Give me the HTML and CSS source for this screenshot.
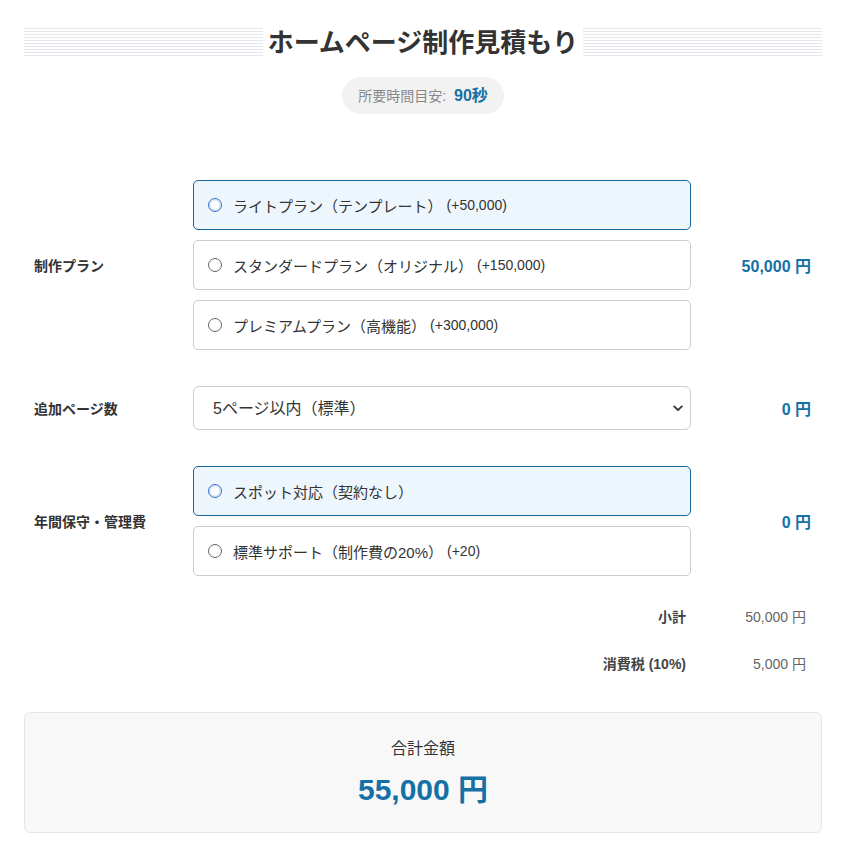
FILE: index.html
```html
<!DOCTYPE html>
<html lang="ja">
<head>
  <meta charset="UTF-8" />
  <meta name="viewport" content="width=device-width, initial-scale=1.0" />
  <title>ホームページ制作見積もり</title>
  <link rel="stylesheet" href="styles.css">
</head>
<body>
  <div class="estimate">
    <header>
      <h1><span>ホームページ制作見積もり</span></h1>
      <p class="time-badge">所要時間目安: <strong>90秒</strong></p>
    </header>

    <section class="row">
      <div class="row-label">制作プラン</div>
      <div class="options">
        <label class="option selected">
          <input type="radio" name="plan" checked />
          <span>ライトプラン（テンプレート）</span>
          <span class="add">(+50,000)</span>
        </label>
        <label class="option">
          <input type="radio" name="plan" />
          <span>スタンダードプラン（オリジナル）</span>
          <span class="add">(+150,000)</span>
        </label>
        <label class="option">
          <input type="radio" name="plan" />
          <span>プレミアムプラン（高機能）</span>
          <span class="add">(+300,000)</span>
        </label>
      </div>
      <div class="row-price">50,000 円</div>
    </section>

    <section class="row">
      <div class="row-label">追加ページ数</div>
      <div class="select-wrap">
        <select>
          <option>5ページ以内（標準）</option>
          <option>6〜10ページ (+50,000)</option>
          <option>11〜20ページ (+120,000)</option>
        </select>
        <svg class="chevron" width="10" height="7" viewBox="0 0 10 7">
          <path d="M1.2 1.4 L5 5.2 L8.8 1.4" fill="none" stroke="#333" stroke-width="1.8" stroke-linecap="round" stroke-linejoin="round" />
        </svg>
      </div>
      <div class="row-price">0 円</div>
    </section>

    <section class="row">
      <div class="row-label">年間保守・管理費</div>
      <div class="options">
        <label class="option selected">
          <input type="radio" name="support" checked />
          <span>スポット対応（契約なし）</span>
        </label>
        <label class="option">
          <input type="radio" name="support" />
          <span>標準サポート（制作費の20%）</span>
          <span class="add">(+20)</span>
        </label>
      </div>
      <div class="row-price">0 円</div>
    </section>

    <div class="sum-row">
      <div class="sum-label">小計</div>
      <div class="sum-value">50,000 円</div>
    </div>
    <div class="sum-row">
      <div class="sum-label">消費税 (10%)</div>
      <div class="sum-value">5,000 円</div>
    </div>

    <section class="total">
      <p class="total-label">合計金額</p>
      <p class="total-amount">55,000 円</p>
    </section>
  </div>
</body>
</html>
```

FILE: styles.css
```css
body {
  font-family: 'Liberation Sans', 'Noto Sans CJK JP', sans-serif;
  margin: 0;
  padding: 0;
  background-color: #fff;
  color: #333;
}
.estimate {
  margin: 0 24px;
  padding-top: 28px;
}
header {
  text-align: center;
  margin-bottom: 48px;
}
header h1 {
  margin: 0;
  font-size: 26px;
  line-height: 30px;
  height: 30px;
  font-weight: bold;
  color: #333;
  background: repeating-linear-gradient(to bottom, #e3e6ea 0, #e3e6ea 1px, transparent 1px, transparent 3px);
}
header h1 span {
  background-color: #fff;
  padding: 0 5px;
}
.time-badge {
  display: inline-block;
  margin: 19px 0 0;
  padding: 0 16px;
  height: 37px;
  line-height: 37px;
  border-radius: 19px;
  background-color: #f2f2f2;
  color: #888;
  font-size: 14px;
}
.time-badge strong {
  color: #1570a6;
  font-size: 16px;
  margin-left: 4px;
}
.row {
  display: grid;
  grid-template-columns: 169px 498px 1fr;
  align-items: center;
  padding: 18px 0;
}
.row-label {
  padding-left: 10px;
  font-size: 14px;
  font-weight: bold;
  color: #333;
}
.row-price {
  text-align: right;
  padding-right: 11px;
  font-size: 16px;
  font-weight: bold;
  color: #1570a6;
}
.options {
  display: flex;
  flex-direction: column;
  gap: 10px;
}
.option {
  display: flex;
  align-items: center;
  height: 50px;
  box-sizing: border-box;
  padding: 0 14px;
  border: 1px solid #ccc;
  border-radius: 5px;
  background-color: #fff;
  font-size: 15px;
  color: #333;
  cursor: pointer;
}
.option.selected {
  background-color: #eef6fd;
  border-color: #17699a;
}
.option input {
  appearance: none;
  -webkit-appearance: none;
  width: 14px;
  height: 14px;
  margin: 0 11px 0 0;
  border: 1px solid #666;
  border-radius: 50%;
  background-color: #fff;
  flex-shrink: 0;
}
.option input:checked {
  border: 1.5px solid #2f6fd0;
  box-shadow: inset 0 0 0 1.5px #d5e4f8;
}
.option .add {
  font-size: 14px;
  margin-left: 4px;
}
.select-wrap {
  position: relative;
}
.select-wrap select {
  appearance: none;
  -webkit-appearance: none;
  display: block;
  width: 100%;
  height: 44px;
  padding: 0 19px;
  border: 1px solid #ccc;
  border-radius: 6px;
  background-color: #fff;
  font-family: inherit;
  font-size: 16px;
  color: #333;
}
.chevron {
  position: absolute;
  right: 8px;
  top: 19px;
  pointer-events: none;
}
.sum-row {
  display: grid;
  grid-template-columns: 1fr 136px;
  padding: 14px 0;
  line-height: 19px;
  font-size: 14px;
}
.sum-label {
  text-align: right;
  font-weight: bold;
  color: #444;
}
.sum-value {
  text-align: right;
  padding-right: 16px;
  color: #666;
}
.total {
  margin-top: 24px;
  padding: 25px 20px 24px;
  background-color: #f8f8f8;
  border: 1px solid #e6e6e6;
  border-radius: 6px;
  text-align: center;
}
.total-label {
  margin: 0 0 12px;
  font-size: 16px;
  line-height: 22px;
  color: #333;
}
.total-amount {
  margin: 0;
  font-size: 30px;
  line-height: 36px;
  font-weight: bold;
  color: #1570a6;
}
```
